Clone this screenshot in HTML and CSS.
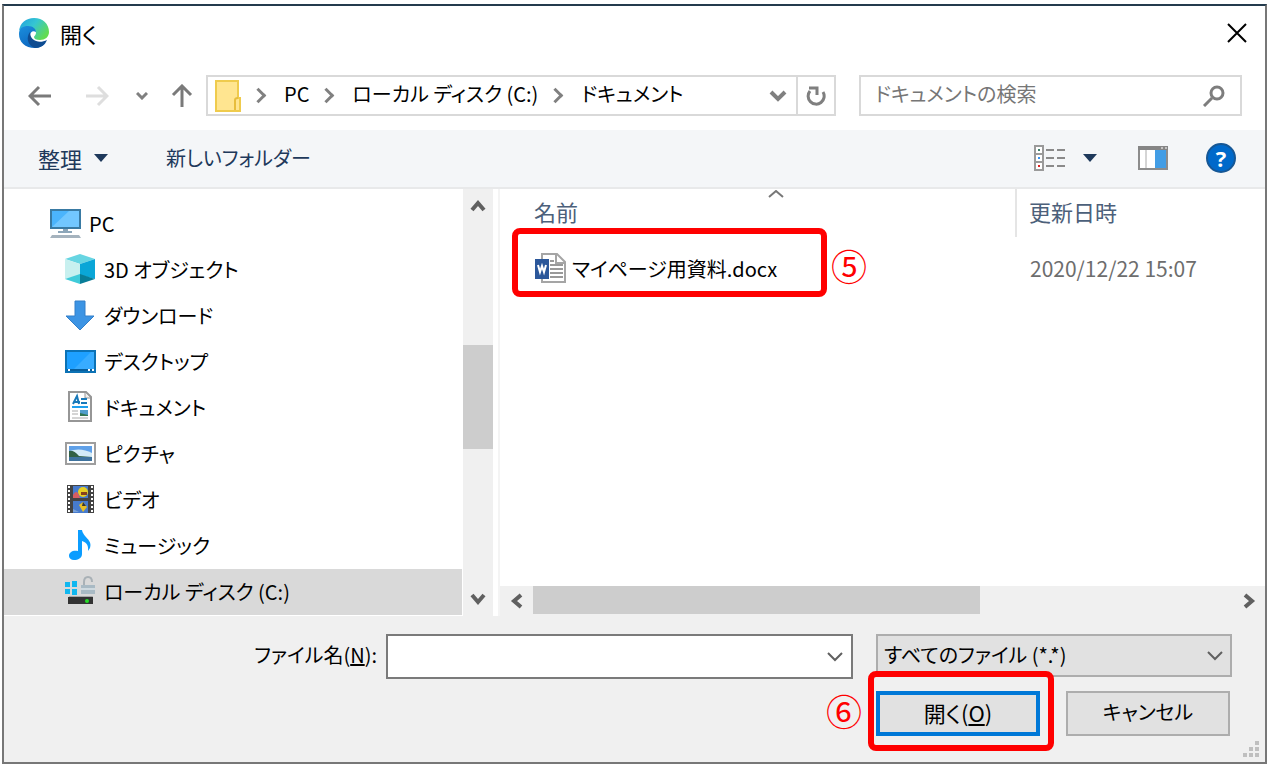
FILE: index.html
```html
<!DOCTYPE html>
<html lang="ja">
<head>
  <meta charset="UTF-8">
  <title>開く</title>
  <link rel="stylesheet" href="styles.css">
</head>
<body>
  <div class="dialog">
    <header class="titlebar">
      <svg class="logo" width="32" height="32" viewBox="0 0 32 32">
        <defs>
          <linearGradient id="edge-top" x1="0" y1="0" x2="1" y2="0.6">
            <stop offset="0" stop-color="#1f9fe0"/>
            <stop offset="0.5" stop-color="#35c6d2"/>
            <stop offset="1" stop-color="#62dc50"/>
          </linearGradient>
          <linearGradient id="edge-left" x1="0" y1="0" x2="0.6" y2="1">
            <stop offset="0" stop-color="#1b8fdd"/>
            <stop offset="1" stop-color="#0c63bd"/>
          </linearGradient>
        </defs>
        <path d="M1 14C2 6 8 1 16 1c9 0 15 6 15 14 0 5-4 8-9 8-4 0-6-1-6-3 0-1 2-2 2-4 0-3-3-5-7-5-5 0-9 1-10 3z" fill="url(#edge-top)"/>
        <path d="M1 17c0-6 4-8 9-8 5 0 8 3 8 6-3-2-6 0-6 4 0 6 5 9 10 8 2 0 5-1 6-2-2 4-7 6-11 6C7 31 1 25 1 17z" fill="url(#edge-left)"/>
        <path d="M12 15c-4 5-3 13 5 16 5 0 10-3 12-8-8 4-17 1-17-8z" fill="#0f4c91"/>
      </svg>
      <h1>開く</h1>
      <button class="icon-btn close" aria-label="閉じる">
        <svg width="20" height="20" viewBox="0 0 20 20"><path d="M1 1l18 18M19 1L1 19" stroke="#000" stroke-width="2" fill="none"/></svg>
      </button>
    </header>

    <nav class="navbar">
      <div class="history">
        <button class="icon-btn" aria-label="戻る">
          <svg width="24" height="22" viewBox="0 0 24 22"><path d="M23 11H2M11 2l-9 9 9 9" stroke="#7a7a7a" stroke-width="3" fill="none"/></svg>
        </button>
        <button class="icon-btn forward" aria-label="進む">
          <svg width="24" height="22" viewBox="0 0 24 22"><path d="M1 11h21M13 2l9 9-9 9" stroke="#dedede" stroke-width="3" fill="none"/></svg>
        </button>
        <button class="icon-btn recent" aria-label="最近表示した場所">
          <svg width="12" height="8" viewBox="0 0 12 8"><path d="M1 1l5 5 5-5" stroke="#808080" stroke-width="3" fill="none"/></svg>
        </button>
        <button class="icon-btn" aria-label="上へ">
          <svg width="22" height="24" viewBox="0 0 22 24"><path d="M11 23V2M2 11l9-9 9 9" stroke="#7a7a7a" stroke-width="3" fill="none"/></svg>
        </button>
      </div>
      <div class="address">
        <svg class="folder" width="26" height="32" viewBox="0 0 26 32">
          <path d="M1 1h22v17h2v13H1z" fill="#ffe590" stroke="#efcb4d" stroke-width="2"/>
          <path d="M20 30V20q0-2 3-2" fill="none" stroke="#e7bd3d" stroke-width="2"/>
        </svg>
        <ol class="crumbs">
          <li><a href="#">PC</a></li>
          <li><a href="#">ローカル ディスク (C:)</a></li>
          <li><a href="#">ドキュメント</a></li>
        </ol>
        <button class="icon-btn history-btn" aria-label="以前の場所">
          <svg width="18" height="12" viewBox="0 0 18 12"><path d="M2 2l7 7 7-7" stroke="#808080" stroke-width="4" fill="none"/></svg>
        </button>
        <button class="icon-btn refresh" aria-label="最新の情報に更新">
          <svg width="20" height="22" viewBox="0 0 20 22"><path d="M4 6a8 8 0 1 0 13 1M3 3h8v7" stroke="#7f7f7f" stroke-width="3" fill="none"/></svg>
        </button>
      </div>
      <div class="search">
        <input type="search" aria-label="ドキュメントの検索" placeholder="ドキュメントの検索">
        <svg width="24" height="22" viewBox="0 0 24 22"><circle cx="15" cy="8" r="6" stroke="#7d7d7d" stroke-width="3" fill="none"/><path d="M10 13l-8 8" stroke="#7d7d7d" stroke-width="3"/></svg>
      </div>
    </nav>

    <div class="toolbar">
      <button class="tool organize">整理 <span class="caret"></span></button>
      <button class="tool new-folder">新しいフォルダー</button>
      <button class="tool view" aria-label="表示方法の変更">
        <svg width="32" height="26" viewBox="0 0 32 26">
          <path d="M1 1h8v24H1zM1 9h8M1 17h8" fill="#fff" stroke="#9a9a9a" stroke-width="2"/>
          <path d="M4 5h2" stroke="#3e7d6a" stroke-width="2"/><path d="M4 13h2" stroke="#3690f0" stroke-width="2"/><path d="M4 21h2" stroke="#e02020" stroke-width="2"/>
          <path d="M12 5h8M23 5h8M12 13h8M23 13h8M12 21h8M23 21h8" stroke="#8a8a8a" stroke-width="2"/>
        </svg>
        <span class="caret"></span>
      </button>
      <button class="tool preview" aria-label="プレビュー ウィンドウを表示します">
        <svg width="30" height="24" viewBox="0 0 30 24">
          <path d="M1 1h28v22H1z" fill="#fff" stroke="#8c8c8c" stroke-width="2"/>
          <path d="M0 0h30v4H0z" fill="#858585"/><path d="M23 2h2M27 2h2" stroke="#fff"/>
          <path d="M8 4v18" stroke="#aaa"/><path d="M17 4h11v18H17z" fill="#429de5"/>
        </svg>
      </button>
      <button class="tool help" aria-label="ヘルプ">?</button>
    </div>

    <div class="panes">
      <aside class="tree">
        <ul>
          <li class="root"><a href="#">
            <svg width="32" height="32" viewBox="0 0 32 32">
              <path d="M2 3h29v18H2z" fill="#4bb4fc" stroke="#397aa3" stroke-width="2"/><path d="M3 20L20 4h10v16z" fill="#72c7ff"/>
              <path d="M14 22h5v2h4v2H9v-2h5z" fill="#8ca6b9"/><path d="M3 28h27l2 3H1z" fill="#a5b3be"/>
            </svg>PC</a></li>
          <li><a href="#">
            <svg width="32" height="32" viewBox="0 0 32 32">
              <path d="M1 6l15-5 15 5-15 5z" fill="#67d5e2"/><path d="M1 6l15 5v11L1 26z" fill="#c8f0ef"/>
              <path d="M31 6l-15 5v11l15 4z" fill="#0aa6d7"/><path d="M1 26l15-5v10z" fill="#40cbd9"/><path d="M31 26l-15-5v10z" fill="#087d98"/>
            </svg>3D オブジェクト</a></li>
          <li><a href="#">
            <svg width="32" height="32" viewBox="0 0 32 32"><path d="M11 2h10v15h9L16 31 2 17h9z" fill="#3c94e4" stroke="#327fc9"/></svg>ダウンロード</a></li>
          <li><a href="#">
            <svg width="32" height="32" viewBox="0 0 32 32">
              <path d="M2 6h29v21H2z" fill="#1ea0ff" stroke="#0c72b5" stroke-width="2"/><path d="M30 7v17H10L27 7z" fill="#38acff"/>
              <path d="M3 24h27v2H3z" fill="#075f9d"/><path d="M4 25h2M24 25h2M28 25h2" stroke="#fff" stroke-width="2"/>
            </svg>デスクトップ</a></li>
          <li><a href="#">
            <svg width="32" height="32" viewBox="0 0 32 32">
              <path d="M5 1h17l5 5v24H5z" fill="#fff" stroke="#969696" stroke-width="2"/><path d="M21 2v5h5" fill="#eee" stroke="#969696"/>
              <path d="M9 13l4-8 2 8M10 11h6M17 8h6M17 12h6" stroke="#1979b9" stroke-width="2" fill="none"/>
              <path d="M8 16h16" stroke="#20a0ed" stroke-width="2"/><path d="M8 20h6M8 23h6M8 27h16" stroke="#aaa"/>
              <path d="M16 19h8v6h-8z" fill="#519ecc"/><path d="M16 22l8 2v1h-8z" fill="#347752"/>
            </svg>ドキュメント</a></li>
          <li><a href="#">
            <svg width="32" height="32" viewBox="0 0 32 32">
              <path d="M2 6h29v21H2z" fill="#fff" stroke="#9e9e9e" stroke-width="2"/>
              <path d="M5 9h23v15H5z" fill="#5fa0e8"/><path d="M5 14q12-4 23 2v5H5z" fill="#d4ebf8"/>
              <path d="M5 14q5-1 10 5l13 1H5z" fill="#326145"/><path d="M5 20h23v4H5z" fill="#3f739e"/>
            </svg>ピクチャ</a></li>
          <li><a href="#">
            <svg width="32" height="32" viewBox="0 0 32 32">
              <path d="M3 2h27v28H3z" fill="#444"/><path d="M5 3v27M28 3v27" stroke="#fff" stroke-width="2" stroke-dasharray="2 2"/>
              <path d="M9 3h15v12H9zM9 18h15v12H9z" fill="#477bcd"/>
              <circle cx="19" cy="9" r="5" fill="#e8cf24"/><path d="M9 12q4-7 7 3H9z" fill="#d65d61"/><path d="M17 9h6v3h-6z" fill="#86421c"/>
              <path d="M15 22l4-3 4 5-4 5z" fill="#e8bf24"/><path d="M19 19l3 4h-4z" fill="#323339"/><path d="M9 26l6 3H9z" fill="#79a2da"/>
            </svg>ビデオ</a></li>
          <li><a href="#">
            <svg width="32" height="32" viewBox="0 0 32 32"><path d="M14 1h4c1 7 11 10 8 18l-2 3c1-7-3-9-6-10v13c0 4-4 6-8 6-3 0-5-2-5-4 0-4 4-6 9-5z" fill="#0b9dff"/></svg>ミュージック</a></li>
          <li class="selected"><a href="#">
            <svg width="32" height="32" viewBox="0 0 32 32">
              <path d="M1 7h5v5H1zM8 6h5v6H8zM1 14h5v5H1zM8 14h5v6H8z" fill="#11b7ef"/>
              <path d="M20 10V7q0-5 4-5t4 5" fill="none" stroke="#a9b1b6" stroke-width="2"/><path d="M17 10h14v9H17z" fill="#a9bac4"/><path d="M17 14h14" stroke="#cfdae0" stroke-width="2"/>
              <path d="M5 21h24l-1 2H5z" fill="#a8a8a8"/><path d="M4 22h25v7H4z" fill="#333"/><circle cx="23" cy="26" r="2" fill="#25dd28"/>
            </svg>ローカル ディスク (C:)</a></li>
        </ul>
      </aside>
      <div class="vscroll">
        <button class="icon-btn" aria-label="上へスクロール"><svg width="16" height="14" viewBox="0 0 16 14"><path d="M2 11l6-7 6 7" stroke="#606060" stroke-width="4" fill="none"/></svg></button>
        <div class="vtrack"><div class="vthumb"></div></div>
        <button class="icon-btn" aria-label="下へスクロール"><svg width="16" height="14" viewBox="0 0 16 14"><path d="M2 3l6 7 6-7" stroke="#606060" stroke-width="4" fill="none"/></svg></button>
      </div>

      <main class="files">
        <table>
          <thead>
            <tr>
              <th class="name">名前
                <svg class="sort" width="16" height="8" viewBox="0 0 16 8"><path d="M1 7l7-6 7 6" stroke="#777" stroke-width="2" fill="none"/></svg>
              </th>
              <th>更新日時</th>
            </tr>
          </thead>
          <tbody>
            <tr>
              <td class="name">
                <a href="#">
                  <svg width="32" height="32" viewBox="0 0 32 32">
                    <path d="M8 2h15l8 8v20H8z" fill="#fff" stroke="#a5a5a5" stroke-width="2"/><path d="M22 2v9h8" fill="none" stroke="#a5a5a5" stroke-width="2"/>
                    <path d="M16 9h4M16 13h13M16 17h13M16 21h13M16 25h13" stroke="#999" stroke-width="2"/>
                    <path d="M1 7h14v20H1z" fill="#2b579a"/><path d="M4 13l2 7 2-6 2 6 2-7" stroke="#fff" stroke-width="2" fill="none"/>
                  </svg>マイページ用資料.docx</a>
                <span class="mark mark-file"></span>
                <span class="step step-file">⑤</span>
              </td>
              <td class="date">2020/12/22 15:07</td>
            </tr>
          </tbody>
        </table>
        <div class="hscroll">
          <button class="icon-btn" aria-label="左へスクロール"><svg width="14" height="16" viewBox="0 0 14 16"><path d="M11 2L4 8l7 6" stroke="#606060" stroke-width="4" fill="none"/></svg></button>
          <div class="htrack"><div class="hthumb"></div></div>
          <button class="icon-btn" aria-label="右へスクロール"><svg width="14" height="16" viewBox="0 0 14 16"><path d="M3 2l7 6-7 6" stroke="#606060" stroke-width="4" fill="none"/></svg></button>
        </div>
      </main>
    </div>

    <form class="footer">
      <label for="filename">ファイル名(<u>N</u>):</label>
      <div class="combo">
        <input id="filename" type="text">
        <button type="button" class="icon-btn" aria-label="候補を表示"><svg width="18" height="12" viewBox="0 0 18 12"><path d="M2 2l7 7 7-7" stroke="#606060" stroke-width="2" fill="none"/></svg></button>
      </div>
      <div class="filter">
        <select aria-label="ファイルの種類">
          <option>すべてのファイル (*.*)</option>
        </select>
        <svg width="18" height="12" viewBox="0 0 18 12"><path d="M2 2l7 7 7-7" stroke="#606060" stroke-width="2" fill="none"/></svg>
      </div>
      <div class="actions">
        <div class="open">
          <button type="button" class="btn primary">開く(<u>O</u>)</button>
          <span class="mark mark-open"></span>
          <span class="step step-open">⑥</span>
        </div>
        <button type="button" class="btn">キャンセル</button>
      </div>
      <svg class="grip" width="16" height="16" viewBox="0 0 16 16"><path d="M12 0h4v4h-4zM6 6h4v4H6zM12 6h4v4h-4zM0 12h4v4H0zM6 12h4v4H6zM12 12h4v4h-4z" fill="#bfbfbf"/></svg>
    </form>
  </div>
</body>
</html>
```
FILE: styles.css
```css
* {
  box-sizing: border-box;
}
body {
  margin: 0;
  padding: 4px 5px 4px 2px;
  background-color: #fff;
}
body,
button,
input,
select {
  font-family: "Noto Sans CJK JP", sans-serif;
  font-size: 20px;
  font-feature-settings: "palt";
  color: #000;
}
a {
  color: inherit;
  text-decoration: none;
}
ul,
ol {
  margin: 0;
  padding: 0;
  list-style: none;
}
svg {
  display: block;
  flex: none;
}
button {
  padding: 0;
  cursor: default;
}
.icon-btn {
  display: flex;
  align-items: center;
  justify-content: center;
  border: 0;
  background: none;
}
.dialog {
  border: 2px solid #777;
  border-top-color: #243b4d;
}

/* title */
.titlebar {
  display: flex;
  align-items: center;
  height: 56px;
  padding: 0 18px 2px 14px;
}
.titlebar h1 {
  flex: 1;
  margin: 0 0 0 10px;
  font-size: 22px;
  font-weight: normal;
}

/* address and search */
.navbar {
  display: flex;
  height: 68px;
  padding: 13px 23px 14px 24px;
}
.history {
  display: flex;
  width: 178px;
}
.forward {
  margin-left: 33px;
}
.recent {
  margin: 0 23px 0 27px;
}
.address,
.search {
  display: flex;
  align-items: center;
  border: 2px solid #d9d9d9;
}
.address {
  flex: 619;
  padding-left: 7px;
}
.search {
  flex: 351;
  margin-left: 23px;
  padding: 0 14px;
}
.search input {
  flex: 1;
  min-width: 0;
  padding: 0 0 4px;
  border: 0;
  outline: 0;
  background: none;
}
.search input::placeholder {
  color: #767676;
}
.crumbs {
  display: flex;
  flex: 1;
  white-space: nowrap;
}
.crumbs li {
  display: flex;
  align-items: center;
}
.crumbs a {
  padding-bottom: 4px;
}
.crumbs li::before {
  content: "";
  width: 8px;
  height: 8px;
  margin: 0 20px 0 12px;
  border: solid #808080;
  border-width: 3px 3px 0 0;
  transform: rotate(45deg);
}
.history-btn {
  width: 36px;
  height: 37px;
}
.refresh {
  width: 38px;
  height: 37px;
  border-left: 2px solid #d9d9d9;
}

/* toolbar */
.toolbar {
  display: flex;
  align-items: center;
  height: 59px;
  padding: 0 29px 2px 34px;
  border-bottom: 2px solid #e8e9ea;
  background-color: #f4f6f8;
}
.tool {
  display: flex;
  align-items: center;
  gap: 12px;
  border: 0;
  background: none;
  color: #1e395b;
}
.organize {
  font-size: 22px;
}
.caret {
  border: solid transparent;
  border-width: 8px 7px 0;
  border-top-color: #1e395b;
}
.new-folder {
  margin-left: 58px;
}
.view {
  gap: 17px;
  margin-left: auto;
}
.preview {
  margin: 0 38px 0 41px;
}
.help {
  justify-content: center;
  width: 30px;
  height: 30px;
  border: 2px solid #165795;
  border-radius: 50%;
  background-color: #0069ca;
  color: #fff;
  font-family: "Open Sans", sans-serif;
  font-size: 22px;
  font-weight: bold;
}

/* panes */
.panes {
  display: flex;
  height: 427px;
}
.tree {
  flex: 0 0 458px;
  padding-top: 12px;
}
.tree a {
  display: flex;
  align-items: center;
  gap: 8px;
  height: 46px;
  padding: 0 0 2px 60px;
}
.tree .root a {
  padding-left: 45px;
}
.tree .selected {
  background-color: #d9d9d9;
}
.vscroll {
  display: flex;
  flex-direction: column;
  width: 30px;
  margin: 0 5px 0 1px;
  background-color: #f0f0f0;
}
.vscroll .icon-btn {
  height: 34px;
}
.vtrack {
  flex: 1;
  padding-top: 122px;
}
.vthumb {
  height: 104px;
  background-color: #cdcdcd;
}
.files {
  display: flex;
  flex: 1;
  flex-direction: column;
  justify-content: space-between;
  border-left: 2px solid #f4f4f4;
}
table {
  width: 100%;
  border-collapse: collapse;
  table-layout: fixed;
}
th,
td {
  padding: 0 0 0 12px;
  text-align: left;
  font-weight: normal;
}
th {
  height: 48px;
  padding-bottom: 4px;
  color: #4c607a;
  font-size: 22px;
}
th + th {
  border-left: 2px solid #e5e5e5;
}
.name {
  position: relative;
  width: 516px;
  padding-left: 34px;
}
.sort {
  position: absolute;
  top: 1px;
  left: 52%;
}
td {
  height: 62px;
}
td a {
  display: flex;
  align-items: center;
  gap: 6px;
}
.date {
  padding-left: 14px;
  color: #6d6d6d;
  font-size: 21px;
}
.hscroll {
  display: flex;
  height: 30px;
  background-color: #f0f0f0;
}
.hscroll .icon-btn {
  width: 33px;
}
.htrack {
  flex: 1;
}
.hthumb {
  width: 64%;
  height: 28px;
  background-color: #cdcdcd;
}

/* red guide frames and step numbers */
.mark {
  position: absolute;
  border: 6px solid #f00;
  border-radius: 8px;
  pointer-events: none;
}
.step {
  position: absolute;
  color: #f00;
  font-size: 36px;
  line-height: 36px;
}
.mark-file {
  top: -9px;
  left: 12px;
  width: 315px;
  height: 69px;
}
.step-file {
  top: 10px;
  left: 331px;
}
.mark-open {
  top: -20px;
  left: -8px;
  width: 186px;
  height: 80px;
}
.step-open {
  top: 1px;
  left: -50px;
}

/* footer */
.footer {
  position: relative;
  display: grid;
  grid-template-columns: 373px 499fr 356fr;
  gap: 12px 0;
  padding: 18px 33px 26px 0;
  background-color: #f0f0f0;
}
.footer label {
  align-self: center;
  padding-bottom: 4px;
  text-align: right;
}
.combo {
  display: flex;
  height: 45px;
  margin: 0 23px 0 9px;
  border: 2px solid #7a7a7a;
  background-color: #fff;
}
.combo input {
  flex: 1;
  min-width: 0;
  border: 0;
  outline: 0;
}
.combo .icon-btn {
  width: 32px;
}
.filter {
  position: relative;
}
.filter select {
  width: 100%;
  height: 43px;
  padding: 0 6px 2px;
  border: 2px solid #adadad;
  border-radius: 0;
  background-color: #e1e1e1;
  appearance: none;
}
.filter svg {
  position: absolute;
  top: 16px;
  right: 8px;
  pointer-events: none;
}
.actions {
  display: flex;
  grid-column: 3;
  gap: 26px;
}
.open {
  position: relative;
}
.btn {
  width: 164px;
  height: 45px;
  padding-bottom: 4px;
  border: 2px solid #adadad;
  background-color: #e1e1e1;
}
.primary {
  border: 4px solid #0078d7;
  font-size: 22px;
}
.grip {
  position: absolute;
  right: 6px;
  bottom: 5px;
}
```
